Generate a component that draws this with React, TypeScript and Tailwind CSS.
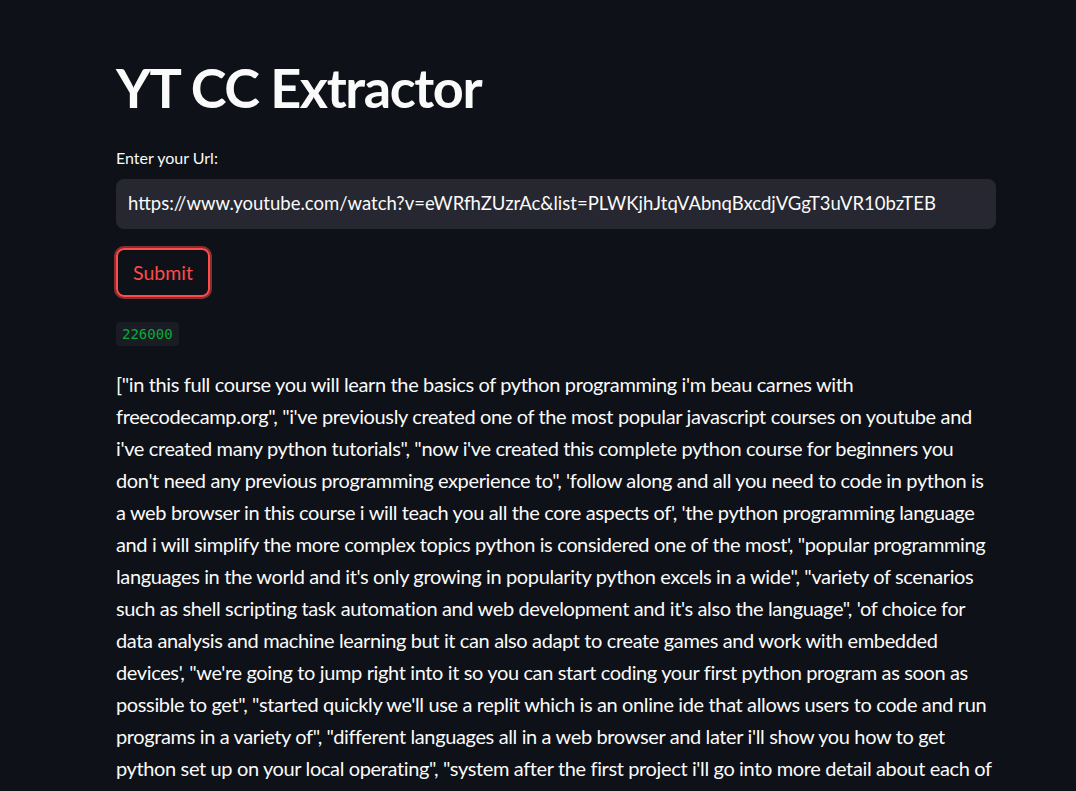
import React from "react";

const lines: string[] = [
  `["in this full course you will learn the basics of python programming i'm beau carnes with`,
  `freecodecamp.org", "i've previously created one of the most popular javascript courses on youtube and`,
  `i've created many python tutorials", "now i've created this complete python course for beginners you`,
  `don't need any previous programming experience to", 'follow along and all you need to code in python is`,
  `a web browser in this course i will teach you all the core aspects of', 'the python programming language`,
  `and i will simplify the more complex topics python is considered one of the most', "popular programming`,
  `languages in the world and it's only growing in popularity python excels in a wide", "variety of scenarios`,
  `such as shell scripting task automation and web development and it's also the language", 'of choice for`,
  `data analysis and machine learning but it can also adapt to create games and work with embedded`,
  `devices', "we're going to jump right into it so you can start coding your first python program as soon as`,
  `possible to get", "started quickly we'll use a replit which is an online ide that allows users to code and run`,
  `programs in a variety of", "different languages all in a web browser and later i'll show you how to get`,
  `python set up on your local operating", "system after the first project i'll go into more detail about each of`,
];

export default function App() {
  return (
    <div className="h-[791px] bg-[#0e1117] text-[#fafafa] font-['Lato','Noto_Sans',sans-serif] overflow-hidden">
      <div className="w-[880px] ml-[116px] pt-[55px]">
        <h1 className="text-[54px] font-bold leading-[66px] tracking-[-1.4px]">YT CC Extractor</h1>

        <label className="block mt-[27px] text-[16px] leading-[20px]">Enter your Url:</label>
        <div className="mt-[11px] h-[50px] rounded-lg bg-[#262730] flex items-center px-[12px] text-[18.5px] whitespace-nowrap">
          https://www.youtube.com/watch?v=eWRfhZUzrAc&amp;list=PLWKjhJtqVAbnqBxcdjVGgT3uVR10bzTEB
        </div>

        <button className="mt-[19px] h-[49px] px-[15px] rounded-lg border-2 border-[#ff4b4b] ring-2 ring-[#ff4b4b]/50 text-[#ff4b4b] text-[19.5px] bg-transparent">
          Submit
        </button>

        <div className="mt-[24px]">
          <code className="inline-block rounded px-[6px] py-[2px] bg-[#1a1c24] text-[#09ab3b] text-[14px] leading-[20px] font-['DejaVu_Sans_Mono',monospace]">
            226000
          </code>
        </div>

        <div className="mt-[22px] text-[20px] leading-[32px] tracking-[-0.37px]">
          {lines.map((l, i) => (
            <div key={i} className="whitespace-nowrap">{l}</div>
          ))}
        </div>
      </div>
    </div>
  );
}
